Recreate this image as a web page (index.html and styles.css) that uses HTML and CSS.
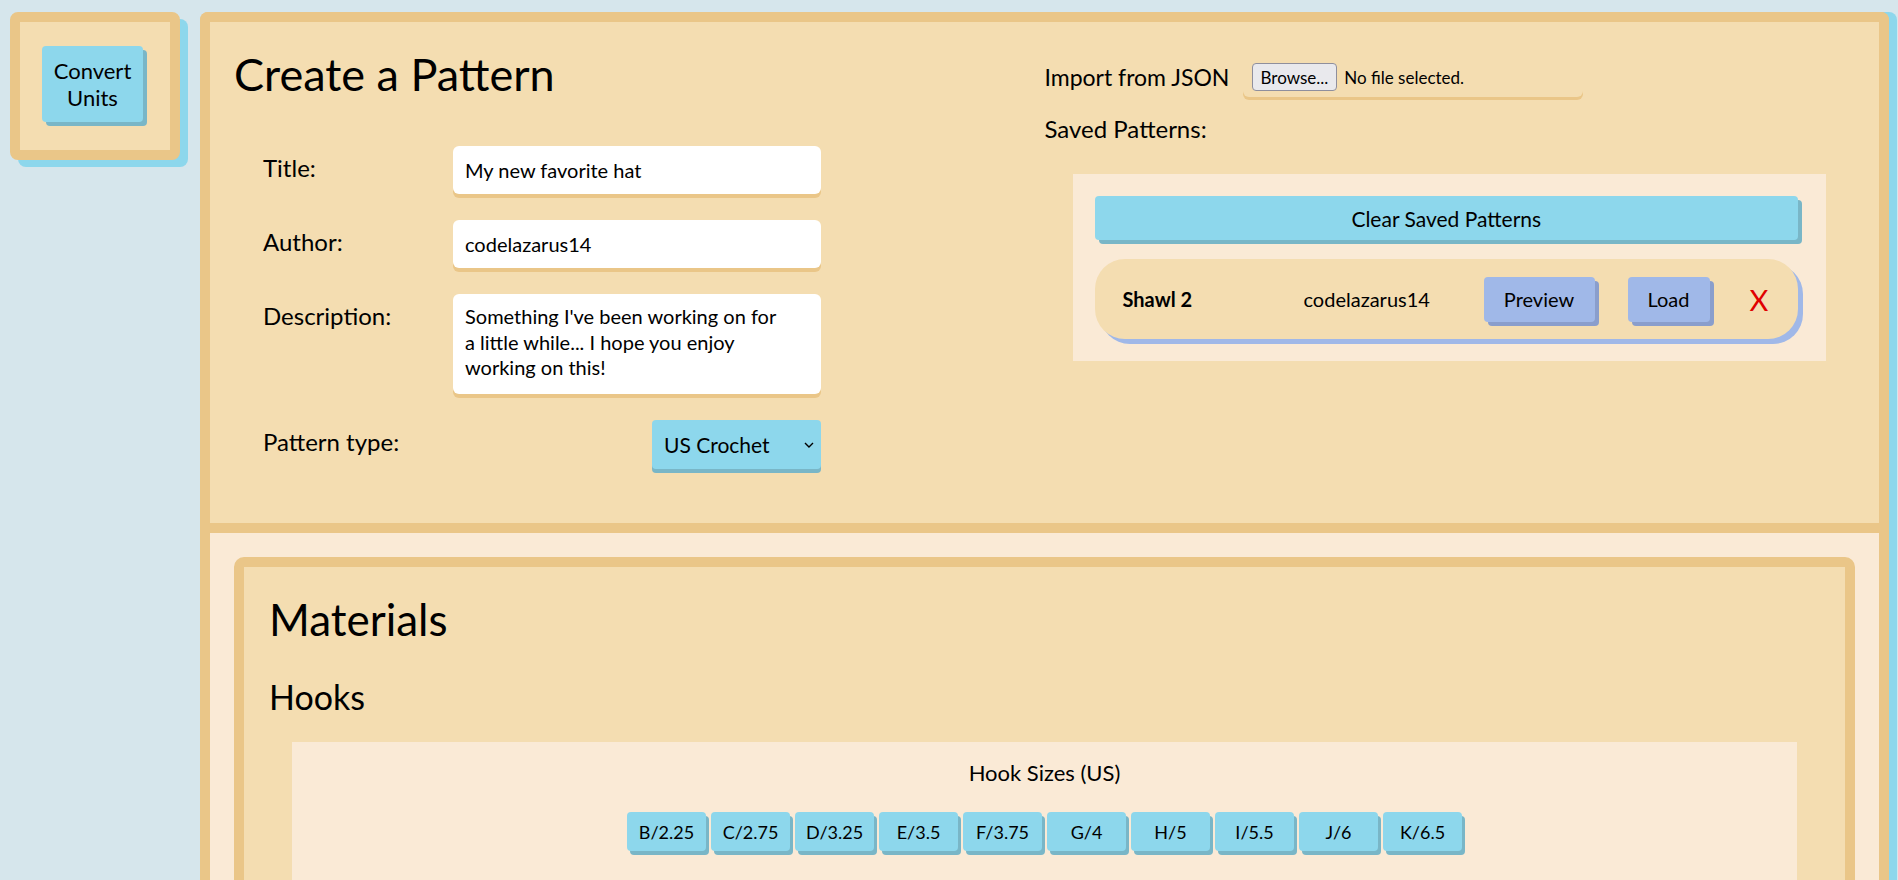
FILE: index.html
```html
<!DOCTYPE html>
<html lang="en">
<head>
<meta charset="utf-8">
<title>Create a Pattern</title>
<link rel="stylesheet" href="styles.css">
</head>
<body>
<div class="page">
  <aside class="side-panel">
    <button class="btn-blue convert-btn">Convert Units</button>
  </aside>

  <main class="main-panel">
    <section class="create-section">
      <div class="create-left">
        <h1 class="page-title">Create a Pattern</h1>
        <div class="form-grid">
          <label class="form-label">Title:</label>
          <input class="text-field" type="text" value="My new favorite hat">

          <label class="form-label">Author:</label>
          <input class="text-field" type="text" value="codelazarus14">

          <label class="form-label">Description:</label>
          <textarea class="text-area">Something I've been working on for
a little while... I hope you enjoy
working on this!</textarea>

          <label class="form-label">Pattern type:</label>
          <div class="select-wrap">
            <select class="type-select">
              <option>US Crochet</option>
              <option>UK Crochet</option>
              <option>Knitting</option>
            </select>
            <svg class="select-chevron" width="10" height="6" viewBox="0 0 10 6"><path d="M1 1 L5 5 L9 1" fill="none" stroke="#000" stroke-width="1.4"/></svg>
          </div>
        </div>
      </div>

      <div class="create-right">
        <div class="import-row">
          <span class="import-label">Import from JSON</span>
          <div class="file-box">
            <button class="browse-btn">Browse...</button>
            <span class="file-status">No file selected.</span>
          </div>
        </div>
        <div class="saved-label">Saved Patterns:</div>
        <div class="saved-box">
          <button class="btn-blue clear-btn">Clear Saved Patterns</button>
          <div class="saved-card">
            <span class="saved-name">Shawl 2</span>
            <span class="saved-author">codelazarus14</span>
            <button class="btn-purple preview-btn">Preview</button>
            <button class="btn-purple load-btn">Load</button>
            <span class="delete-x">X</span>
          </div>
        </div>
      </div>
    </section>

    <section class="lower-section">
      <div class="materials-card">
        <h2 class="materials-title">Materials</h2>
        <h3 class="hooks-title">Hooks</h3>
        <div class="hook-box">
          <div class="hook-caption">Hook Sizes (US)</div>
          <div class="hook-row">
            <button class="btn-blue hook-btn">B/2.25</button>
            <button class="btn-blue hook-btn">C/2.75</button>
            <button class="btn-blue hook-btn">D/3.25</button>
            <button class="btn-blue hook-btn">E/3.5</button>
            <button class="btn-blue hook-btn">F/3.75</button>
            <button class="btn-blue hook-btn">G/4</button>
            <button class="btn-blue hook-btn">H/5</button>
            <button class="btn-blue hook-btn">I/5.5</button>
            <button class="btn-blue hook-btn">J/6</button>
            <button class="btn-blue hook-btn">K/6.5</button>
          </div>
        </div>
      </div>
    </section>
  </main>
</div>
</body>
</html>
```

FILE: styles.css
```css
html {
  scrollbar-width: none;
}
html::-webkit-scrollbar {
  display: none;
}
body {
  margin: 0;
  background: #d6e6ec;
  font-family: Lato, "Open Sans", sans-serif;
  color: #000;
}
button, input, textarea, select {
  font-family: inherit;
  color: #000;
}

.page {
  display: flex;
  align-items: flex-start;
  padding: 12px 9px 0 10px;
  gap: 20px;
}

/* left side panel */
.side-panel {
  flex: 0 0 auto;
  width: 170px;
  height: 148px;
  box-sizing: border-box;
  padding: 24px 0 0 22px;
  background: #f4ddb1;
  border: 10px solid #eac688;
  border-radius: 8px;
  box-shadow: 8px 7px 0 #8dd7ec;
}

.btn-blue {
  background: #8dd7ec;
  border: none;
  border-radius: 4px;
  box-shadow: 4px 4px 0 #79b6c7;
  cursor: pointer;
}
.btn-purple {
  background: #a0b8e8;
  border: none;
  border-radius: 4px;
  box-shadow: 4px 4px 0 #8a9ecc;
  cursor: pointer;
}

.convert-btn {
  width: 101px;
  height: 76px;
  padding: 0 6px;
  font-size: 22px;
  line-height: 27px;
}

/* main panel */
.main-panel {
  flex: 1 1 auto;
  border: 10px solid #eac688;
  border-bottom: none;
  border-radius: 8px 8px 0 0;
  box-shadow: 8px 0 0 #8dd7ec;
  background: #faead6;
  min-height: 900px;
}

.create-section {
  display: grid;
  grid-template-columns: 1fr 1fr;
  background: #f4ddb1;
  border-bottom: 10px solid #eac688;
  height: 511px;
  box-sizing: border-box;
}

.create-left {
  padding: 26px 0 0 24px;
}
.page-title {
  margin: 0;
  font-size: 45px;
  font-weight: 400;
  line-height: 53px;
}

.form-grid {
  margin: 45px 0 0 29px;
  display: grid;
  grid-template-columns: 190px 368px;
  row-gap: 26px;
}
.form-label {
  font-size: 24px;
  line-height: 29px;
  padding-top: 7px;
}
.text-field {
  box-sizing: border-box;
  height: 48px;
  border: none;
  border-radius: 6px;
  background: #fff;
  box-shadow: 0 4px 0 #eac688;
  padding: 0 12px;
  font-size: 20px;
  outline: none;
}
.text-area {
  box-sizing: border-box;
  height: 100px;
  border: none;
  border-radius: 6px;
  background: #fff;
  box-shadow: 0 4px 0 #eac688;
  padding: 10px 12px 0;
  font-size: 20px;
  line-height: 25.5px;
  resize: none;
  overflow: hidden;
  outline: none;
}

.select-wrap {
  position: relative;
  justify-self: end;
  width: 169px;
  height: 49px;
}
.type-select {
  appearance: none;
  -webkit-appearance: none;
  width: 100%;
  height: 100%;
  border: none;
  border-radius: 4px;
  background: #8dd7ec;
  box-shadow: 0 4px 0 #79b6c7;
  padding: 0 0 0 12px;
  font-size: 21px;
  outline: none;
}
.select-chevron {
  position: absolute;
  right: 7px;
  top: 22px;
  pointer-events: none;
}

/* right column */
.create-right {
  padding-top: 34px;
}
.import-row {
  display: flex;
  align-items: center;
  height: 42px;
}
.import-label {
  font-size: 23px;
  width: 198px;
}
.file-box {
  box-sizing: border-box;
  width: 340px;
  height: 40px;
  display: flex;
  align-items: center;
  padding: 0 9px;
  border-radius: 6px;
  box-shadow: 0 3px 0 #eac688;
}
.browse-btn {
  height: 28px;
  padding: 0 8px;
  background: #e9e9ed;
  border: 1px solid #8f8f9d;
  border-radius: 4px;
  font-size: 17px;
}
.file-status {
  margin-left: 7px;
  font-size: 17px;
}

.saved-label {
  margin-top: 16px;
  font-size: 24px;
  line-height: 29px;
}

.saved-box {
  margin: 31px 53px 0 28px;
  background: #faead6;
  padding: 22px 22px 22px 22px;
}
.clear-btn {
  display: block;
  width: calc(100% - 6px);
  height: 44px;
  font-size: 21px;
}
.saved-card {
  margin-top: 19px;
  width: calc(100% - 6px);
  height: 80px;
  box-sizing: border-box;
  display: flex;
  align-items: center;
  padding-left: 28px;
  background: #f4ddb1;
  border-radius: 30px;
  box-shadow: 5px 5px 0 #a0b8e8;
}
.saved-name {
  width: 181px;
  font-size: 20px;
  font-weight: 700;
}
.saved-author {
  width: 180px;
  font-size: 20px;
}
.preview-btn {
  width: 111px;
  height: 45px;
  font-size: 20px;
}
.load-btn {
  margin-left: 33px;
  width: 82px;
  height: 45px;
  font-size: 20px;
}
.delete-x {
  margin-left: 40px;
  color: #e00000;
  font-size: 29px;
}

/* lower section */
.lower-section {
  padding: 24px;
}
.materials-card {
  background: #f4ddb1;
  border: 10px solid #eac688;
  border-radius: 10px;
  padding: 25px 0 0 25px;
  min-height: 500px;
}
.materials-title {
  margin: 0;
  font-size: 44px;
  font-weight: 400;
  line-height: 55px;
}
.hooks-title {
  margin: 29px 0 0;
  font-size: 34px;
  font-weight: 400;
  line-height: 41px;
}
.hook-box {
  margin: 25px 48px 0 23px;
  background: #faead6;
  padding: 18px 0 60px;
  text-align: center;
}
.hook-caption {
  font-size: 22px;
  line-height: 26px;
}
.hook-row {
  margin-top: 26px;
  display: flex;
  justify-content: center;
  gap: 5px;
}
.hook-btn {
  width: 79px;
  height: 39px;
  padding: 0;
  font-size: 18px;
  box-shadow: 3px 4px 0 #79b6c7;
}
```
